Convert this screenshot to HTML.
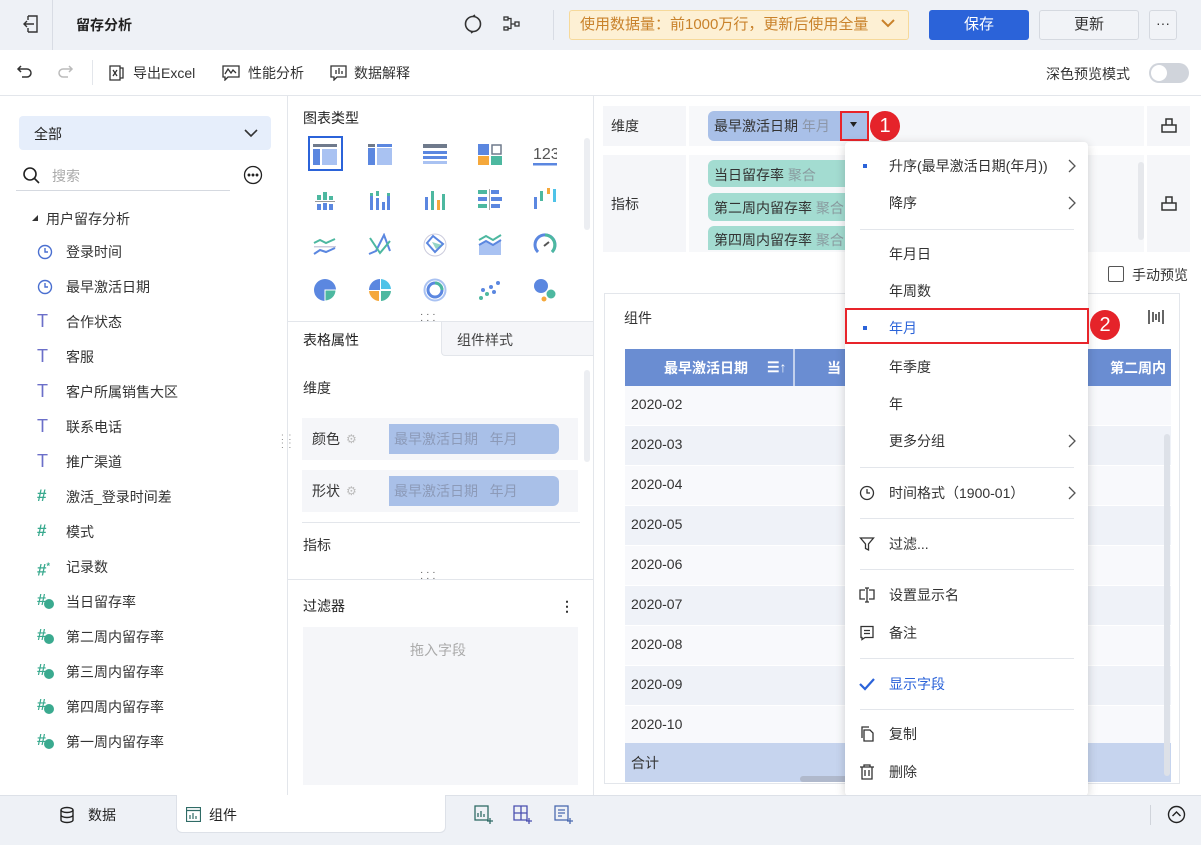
<!DOCTYPE html>
<html><head><meta charset="utf-8">
<style>
*{margin:0;padding:0;box-sizing:border-box}
body{width:1201px;height:845px;position:relative;overflow:hidden;background:#fff;font-family:"Liberation Sans","Noto Sans CJK SC",sans-serif;font-size:14px;color:#333}
.a{position:absolute}
.t{position:absolute;white-space:nowrap;line-height:20px}
svg{position:absolute}
</style></head><body>
<!-- top bar -->
<div class="a" style="left:0;top:0;width:1201px;height:50px;background:#eef1f6"></div>
<div class="a" style="left:52px;top:0;width:1px;height:50px;background:#d8dce4"></div>
<svg style="left:22px;top:14px" width="18" height="20" viewBox="0 0 18 20" fill="none" stroke="#333" stroke-width="1.4"><path d="M6 2h9v16H6M6 2v4M6 18v-4M12 10H2M5 7l-3 3 3 3"/></svg>
<div class="t" style="left:76px;top:15px;font-weight:bold;color:#222">留存分析</div>
<svg style="left:463px;top:14px" width="20" height="20" viewBox="0 0 20 20" fill="none" stroke="#333" stroke-width="1.6"><circle cx="10" cy="10" r="7.5"/><path d="M10 2.5l2-1.5M10 17.5l-2 1.5" /></svg>
<svg style="left:502px;top:15px" width="20" height="18" viewBox="0 0 20 18" fill="none" stroke="#333" stroke-width="1.3"><rect x="2" y="2" width="4" height="3"/><rect x="2" y="12" width="4" height="3"/><rect x="13" y="7" width="4" height="4"/><path d="M6 3.5h3v10H6M9 9h4"/></svg>
<div class="a" style="left:553px;top:10px;width:1px;height:30px;background:#d8dce4"></div>
<div class="a" style="left:569px;top:10px;width:340px;height:30px;background:#fdf0d4;border:1px solid #f6d99a;border-radius:3px"></div>
<div class="t" style="left:580px;top:15px;color:#c9822b;font-size:15px">使用数据量：前1000万行，更新后使用全量</div>
<svg style="left:880px;top:18px" width="16" height="12" viewBox="0 0 16 12" fill="none" stroke="#c9822b" stroke-width="2"><path d="M2 2l6 6 6-6"/></svg>
<div class="a" style="left:929px;top:10px;width:100px;height:30px;background:#2b63d9;border-radius:3px;color:#fff;text-align:center;line-height:30px;font-size:15px">保存</div>
<div class="a" style="left:1039px;top:10px;width:100px;height:30px;background:#f1f3f7;border:1px solid #d5d9e0;border-radius:3px;text-align:center;line-height:28px;font-size:15px">更新</div>
<div class="a" style="left:1149px;top:10px;width:28px;height:30px;background:#f1f3f7;border:1px solid #d5d9e0;border-radius:3px;text-align:center;line-height:24px;font-size:14px">···</div>
<!-- toolbar -->
<div class="a" style="left:0;top:95px;width:1201px;height:1px;background:#e3e6eb"></div>
<svg style="left:16px;top:64px" width="18" height="16" viewBox="0 0 18 16" fill="none" stroke="#333" stroke-width="1.5"><path d="M5 2L2 5l3 3M2 5h9a4 4 0 010 8H6"/></svg>
<svg style="left:56px;top:64px" width="18" height="16" viewBox="0 0 18 16" fill="none" stroke="#bbb" stroke-width="1.5"><path d="M13 2l3 3-3 3M16 5H7a4 4 0 000 8h5"/></svg>
<div class="a" style="left:92px;top:60px;width:1px;height:25px;background:#e3e6eb"></div>
<svg style="left:109px;top:65px" width="15" height="16" viewBox="0 0 15 16" fill="none" stroke="#333" stroke-width="1.3"><path d="M1 1h10v14H1zM11 3h3v10h-3M4 5l4 6M8 5l-4 6"/></svg>
<div class="t" style="left:133px;top:63px">导出Excel</div>
<svg style="left:222px;top:65px" width="18" height="16" viewBox="0 0 18 16" fill="none" stroke="#333" stroke-width="1.3"><path d="M1 1h16v11H6l-3 3v-3H1z M3 9l3-5 3 4 2-3 3 3"/></svg>
<div class="t" style="left:248px;top:63px">性能分析</div>
<svg style="left:330px;top:65px" width="17" height="16" viewBox="0 0 17 16" fill="none" stroke="#333" stroke-width="1.3"><path d="M1 1h15v11H7l-3 3v-3H1z M6 9V5M9 9V3M12 9V6"/></svg>
<div class="t" style="left:354px;top:63px">数据解释</div>
<div class="t" style="left:1046px;top:64px">深色预览模式</div>
<div class="a" style="left:1149px;top:63px;width:40px;height:20px;background:#d0d4db;border-radius:10px"></div>
<div class="a" style="left:1151px;top:65px;width:16px;height:16px;background:#fff;border-radius:8px"></div>
<!-- left panel -->
<div class="a" style="left:19px;top:116px;width:252px;height:34px;background:#e6eefb;border-radius:4px"></div>
<div class="t" style="left:34px;top:124px;color:#222">全部</div>
<svg style="left:244px;top:128px" width="14" height="10" viewBox="0 0 14 10" fill="none" stroke="#333" stroke-width="1.6"><path d="M1 2l6 6 6-6"/></svg>
<svg style="left:22px;top:166px" width="20" height="20" viewBox="0 0 20 20" fill="none" stroke="#222" stroke-width="1.6"><circle cx="8" cy="8" r="6"/><path d="M12.5 12.5L17 17"/></svg>
<div class="t" style="left:52px;top:166px;color:#aaa">搜索</div>
<div class="a" style="left:16px;top:190px;width:214px;height:1px;background:#d5d9e0"></div>
<svg style="left:243px;top:165px" width="20" height="20" viewBox="0 0 20 20" fill="none" stroke="#222" stroke-width="1.3"><circle cx="10" cy="10" r="8.5"/><circle cx="6" cy="10" r=".8" fill="#222"/><circle cx="10" cy="10" r=".8" fill="#222"/><circle cx="14" cy="10" r=".8" fill="#222"/></svg>
<svg style="left:32px;top:215px" width="7" height="7" viewBox="0 0 7 7"><path d="M6 0v6H0z" fill="#333"/></svg>
<div class="t" style="left:46px;top:209px">用户留存分析</div>
<div id="tree"></div>
<div class="a" style="left:287px;top:96px;width:1px;height:699px;background:#e3e6eb"></div>
<div class="t" style="left:281px;top:434px;color:#888;font-size:10px;line-height:8px;letter-spacing:1px">: :<br>: :</div>
<!-- middle panel -->
<div class="t" style="left:303px;top:108px;color:#222">图表类型</div>
<div class="a" style="left:308px;top:136px;width:35px;height:35px;border:2px solid #2b63d9"></div>
<div id="icons"></div>
<div class="a" style="left:584px;top:138px;width:6px;height:92px;background:#eceef2;border-radius:3px"></div>
<div class="a" style="left:288px;top:321px;width:305px;height:1px;background:#e3e6eb"></div>
<div class="t" style="left:420px;top:312px;color:#555;font-size:10px;line-height:6px">· · ·<br>· · ·</div>
<div class="a" style="left:441px;top:322px;width:152px;height:34px;background:#f5f6f9;border-left:1px solid #e3e6eb;border-bottom:1px solid #e3e6eb;border-radius:0 0 0 4px"></div>
<div class="t" style="left:303px;top:330px;color:#222">表格属性</div>
<div class="t" style="left:457px;top:330px;color:#444">组件样式</div>
<div class="a" style="left:584px;top:370px;width:6px;height:92px;background:#eceef2;border-radius:3px"></div>
<div class="t" style="left:303px;top:378px;color:#333">维度</div>
<div class="a" style="left:302px;top:418px;width:276px;height:42px;background:#f5f6f9"></div>
<div class="t" style="left:312px;top:429px">颜色</div>
<div class="t" style="left:346px;top:429px;color:#bbb;font-size:12px">⚙</div>
<div class="a" style="left:389px;top:424px;width:170px;height:30px;background:#a9c0e8;border-radius:0 6px 6px 0"></div>
<div class="t" style="left:394px;top:429px;color:#8c9ab8">最早激活日期 &nbsp; 年月</div>
<div class="a" style="left:302px;top:470px;width:276px;height:42px;background:#f5f6f9"></div>
<div class="t" style="left:312px;top:481px">形状</div>
<div class="t" style="left:346px;top:481px;color:#bbb;font-size:12px">⚙</div>
<div class="a" style="left:389px;top:476px;width:170px;height:30px;background:#a9c0e8;border-radius:0 6px 6px 0"></div>
<div class="t" style="left:394px;top:481px;color:#8c9ab8">最早激活日期 &nbsp; 年月</div>
<div class="a" style="left:302px;top:522px;width:278px;height:1px;background:#e3e6eb"></div>
<div class="t" style="left:303px;top:535px">指标</div>
<div class="a" style="left:288px;top:579px;width:305px;height:1px;background:#e3e6eb"></div>
<div class="t" style="left:420px;top:570px;color:#555;font-size:10px;line-height:6px">· · ·<br>· · ·</div>
<div class="t" style="left:303px;top:596px;color:#222">过滤器</div>
<div class="t" style="left:560px;top:596px;font-weight:bold">⋮</div>
<div class="a" style="left:303px;top:627px;width:275px;height:158px;background:#f5f6f9"></div>
<div class="t" style="left:410px;top:640px;color:#aaa">拖入字段</div>
<div class="a" style="left:593px;top:96px;width:1px;height:699px;background:#e3e6eb"></div>
<!-- right panel -->
<div class="a" style="left:594px;top:96px;width:607px;height:699px;background:#fff"></div>
<div class="a" style="left:603px;top:106px;width:83px;height:40px;background:#f5f6f9"></div>
<div class="a" style="left:689px;top:106px;width:455px;height:40px;background:#f7f8fa"></div>
<div class="a" style="left:1147px;top:106px;width:43px;height:40px;background:#f5f6f9"></div>
<div class="t" style="left:611px;top:116px">维度</div>
<div class="a" style="left:708px;top:111px;width:160px;height:30px;background:#a9c0e8;border-radius:6px 0 0 6px"></div>
<div class="t" style="left:714px;top:116px;color:#333">最早激活日期 <span style="color:#8c96a8">年月</span></div>
<div class="a" style="left:840px;top:111px;width:29px;height:30px;border:2px solid #e8242a"></div>
<svg style="left:850px;top:122px" width="8" height="6"><path d="M0 0h7L3.5 5z" fill="#222"/></svg>
<div class="a" style="left:870px;top:111px;width:30px;height:30px;background:#e5232a;border-radius:15px;color:#fff;text-align:center;line-height:30px;font-size:20px">1</div>
<svg style="left:1160px;top:116px" width="18" height="18" viewBox="0 0 18 18" fill="none" stroke="#333" stroke-width="1.5"><path d="M2 9h14v7H2zM6 9V3h6v6"/></svg>
<div class="a" style="left:603px;top:155px;width:83px;height:97px;background:#f5f6f9"></div>
<div class="a" style="left:689px;top:155px;width:455px;height:97px;background:#f7f8fa"></div>
<div class="a" style="left:1147px;top:155px;width:43px;height:97px;background:#f5f6f9"></div>
<div class="t" style="left:611px;top:194px">指标</div>
<div class="a" style="left:708px;top:160px;width:140px;height:27px;background:#a3dcd1;border-radius:6px 0 0 6px"></div>
<div class="t" style="left:714px;top:165px">当日留存率 <span style="color:#8a9ca0">聚合</span></div>
<div class="a" style="left:708px;top:193px;width:140px;height:28px;background:#a3dcd1;border-radius:6px 0 0 6px"></div>
<div class="t" style="left:714px;top:198px">第二周内留存率 <span style="color:#8a9ca0">聚合</span></div>
<div class="a" style="left:708px;top:226px;width:140px;height:24px;background:#a3dcd1;border-radius:6px 0 0 0"></div>
<div class="t" style="left:714px;top:230px">第四周内留存率 <span style="color:#8a9ca0">聚合</span></div>
<div class="a" style="left:1138px;top:162px;width:6px;height:78px;background:#e6e8ec;border-radius:3px"></div>
<svg style="left:1160px;top:194px" width="18" height="18" viewBox="0 0 18 18" fill="none" stroke="#333" stroke-width="1.5"><path d="M2 9h14v7H2zM6 9V3h6v6"/></svg>
<div class="a" style="left:1108px;top:266px;width:16px;height:16px;border:1px solid #555;border-radius:2px"></div>
<div class="t" style="left:1132px;top:265px">手动预览</div>
<div class="a" style="left:604px;top:293px;width:576px;height:491px;border:1px solid #e3e6eb"></div>
<div class="t" style="left:624px;top:308px">组件</div>
<svg style="left:1147px;top:309px" width="18" height="16" viewBox="0 0 18 16" fill="none" stroke="#333" stroke-width="1.5"><path d="M2 1v14M16 1v14M6 3v10M12 3v10M9 5v6"/></svg>
<div class="a" style="left:625px;top:349px;width:546px;height:37px;background:#6a8dd2"></div>
<div class="a" style="left:793px;top:349px;width:2px;height:433px;background:#fff;opacity:.6"></div>
<div class="t" style="left:664px;top:358px;color:#fff;font-weight:bold">最早激活日期</div>
<div class="t" style="left:767px;top:357px;color:#fff;font-weight:bold">☰↑</div>
<div class="t" style="left:827px;top:358px;color:#fff;font-weight:bold">当</div>
<div class="t" style="left:1110px;top:358px;color:#fff;font-weight:bold">第二周内</div>
<div id="rows"></div>
<div class="a" style="left:625px;top:743px;width:546px;height:39px;background:#c6d4ee"></div>
<div class="t" style="left:631px;top:753px">合计</div>
<div class="a" style="left:1164px;top:434px;width:6px;height:342px;background:#dde1e8;border-radius:3px"></div>
<div class="a" style="left:800px;top:776px;width:60px;height:6px;background:#b0b9cc;border-radius:3px"></div>
<!-- dropdown -->
<div class="a" style="left:845px;top:142px;width:243px;height:654px;background:#fff;border-radius:4px;box-shadow:0 2px 10px rgba(0,0,0,.18)"></div>
<div id="menu"></div>
<div class="a" style="left:845px;top:308px;width:244px;height:36px;border:2px solid #e8242a"></div>
<div class="a" style="left:1090px;top:310px;width:30px;height:30px;background:#e5232a;border-radius:15px;color:#fff;text-align:center;line-height:30px;font-size:20px">2</div>
<!-- bottom bar -->
<div class="a" style="left:0;top:795px;width:1201px;height:50px;background:#eef1f6;border-top:1px solid #dde1e8"></div>
<svg style="left:59px;top:806px" width="16" height="18" viewBox="0 0 16 18" fill="none" stroke="#222" stroke-width="1.4"><ellipse cx="8" cy="4" rx="6" ry="2.5"/><path d="M2 4v10c0 1.4 2.7 2.5 6 2.5s6-1.1 6-2.5V4M2 9c0 1.4 2.7 2.5 6 2.5S14 10.4 14 9"/></svg>
<div class="t" style="left:88px;top:805px;color:#222">数据</div>
<div class="a" style="left:176px;top:795px;width:270px;height:38px;background:#fff;border:1px solid #dde1e8;border-top:none;border-radius:0 0 6px 6px"></div>
<svg style="left:186px;top:807px" width="15" height="15" viewBox="0 0 15 15" fill="none" stroke="#2f6b66" stroke-width="1.2"><rect x=".5" y=".5" width="14" height="14"/><path d="M.5 3.5h14M4 12V8M7 12V6M10 12V9"/></svg>
<div class="t" style="left:209px;top:805px;color:#222">组件</div>
<svg style="left:474px;top:805px" width="20" height="20" viewBox="0 0 20 20" fill="none" stroke="#2f6b66" stroke-width="1.3"><rect x="1" y="1" width="13" height="14"/><path d="M4 12V8M7 12V6M10 12V9M16 13v6M13 16h6"/></svg>
<svg style="left:513px;top:805px" width="20" height="20" viewBox="0 0 20 20" fill="none" stroke="#4a4fb0" stroke-width="1.3"><path d="M1 1h13v14H1zM1 8h13M8 1v14M16 13v6M13 16h6"/></svg>
<svg style="left:554px;top:805px" width="20" height="20" viewBox="0 0 20 20" fill="none" stroke="#4a6ab0" stroke-width="1.3"><rect x="1" y="1" width="13" height="14"/><path d="M4 5h7M4 8h7M4 11h4M16 13v6M13 16h6"/></svg>
<div class="a" style="left:1150px;top:805px;width:1px;height:20px;background:#d0d4db"></div>
<svg style="left:1167px;top:805px" width="19" height="19" viewBox="0 0 19 19" fill="none" stroke="#222" stroke-width="1.4"><circle cx="9.5" cy="9.5" r="8"/><path d="M5.5 11l4-4 4 4"/></svg>

<script>
var tr=[["c","登录时间"],["c","最早激活日期"],["T","合作状态"],["T","客服"],["T","客户所属销售大区"],["T","联系电话"],["T","推广渠道"],["#","激活_登录时间差"],["#","模式"],["#*","记录数"],["f","当日留存率"],["f","第二周内留存率"],["f","第三周内留存率"],["f","第四周内留存率"],["f","第一周内留存率"]];
var h="";tr.forEach(function(e,i){var y=252+i*35;var ic;
if(e[0]=="c")ic='<svg style="left:37px;top:'+(y-8)+'px" width="16" height="16" viewBox="0 0 16 16" fill="none" stroke="#4a6fd0" stroke-width="1.4"><circle cx="8" cy="8" r="6.5"/><path d="M8 4v4h3"/></svg>';
else if(e[0]=="T")ic='<div class="t" style="left:37px;top:'+(y-11)+'px;color:#6b6fc9;font-size:18px">T</div>';
else if(e[0]=="#")ic='<div class="t" style="left:37px;top:'+(y-11)+'px;color:#3aaa8f;font-size:17px;font-weight:bold">#</div>';
else if(e[0]=="#*")ic='<div class="t" style="left:37px;top:'+(y-11)+'px;color:#3aaa8f;font-size:17px;font-weight:bold">#<sup style="font-size:9px">*</sup></div>';
else ic='<div class="t" style="left:37px;top:'+(y-11)+'px;color:#3aaa8f;font-size:16px;font-weight:bold">#</div><div class="a" style="left:44px;top:'+(y-3)+'px;width:10px;height:10px;border-radius:5px;background:#3aaa8f"></div>';
h+=ic+'<div class="t" style="left:66px;top:'+(y-10)+'px">'+e[1]+'</div>';});
document.getElementById("tree").innerHTML=h;
// chart icons
var B="#5b87e0",G="#4db8a0",O="#f5a83b",L="#a9c2f2";h="";
var xs=[313,368,423,478,533],ys=[143,188,233,278];
function ic(x,y,s){return '<svg style="left:'+x+'px;top:'+y+'px" width="24" height="24" viewBox="0 0 24 24">'+s+'</svg>';}
var S=[
'<rect x="0" y="1" width="24" height="3" fill="#6f7a8c"/><rect x="0" y="6" width="7" height="16" fill="'+B+'"/><rect x="9" y="6" width="15" height="16" fill="'+L+'"/>',
'<rect x="0" y="1" width="7" height="3" fill="#6f7a8c"/><rect x="9" y="1" width="15" height="3" fill="'+B+'"/><rect x="0" y="5" width="7" height="17" fill="'+B+'"/><rect x="9" y="5" width="15" height="17" fill="'+L+'"/>',
'<rect x="0" y="1" width="24" height="4" fill="#6f7a8c"/><rect x="0" y="8" width="24" height="3" fill="'+B+'"/><rect x="0" y="13" width="24" height="3" fill="'+B+'"/><rect x="0" y="18" width="24" height="3" fill="'+L+'"/>',
'<rect x="0" y="1" width="11" height="11" fill="'+B+'"/><rect x="14" y="2" width="9" height="9" fill="none" stroke="#6f7a8c" stroke-width="1.5"/><rect x="0" y="13" width="11" height="9" fill="'+O+'"/><rect x="13" y="13" width="11" height="9" fill="'+G+'"/>',
'<text x="0" y="16" font-size="16" fill="#555" font-family="Liberation Sans">123</text><rect x="0" y="20" width="24" height="2.5" fill="'+B+'"/>',
'<rect x="2" y="13" width="20" height="1" fill="#999"/><rect x="4" y="7" width="4" height="5" fill="'+G+'"/><rect x="10" y="4" width="4" height="8" fill="'+G+'"/><rect x="16" y="8" width="4" height="4" fill="'+G+'"/><rect x="4" y="16" width="4" height="6" fill="'+B+'"/><rect x="10" y="15" width="4" height="7" fill="'+B+'"/><rect x="16" y="16" width="4" height="6" fill="'+B+'"/>',
'<rect x="2" y="8" width="3" height="14" fill="'+B+'"/><rect x="2" y="5" width="3" height="3" fill="'+G+'"/><rect x="8" y="10" width="3" height="12" fill="'+B+'"/><rect x="8" y="3" width="3" height="5" fill="'+G+'"/><rect x="14" y="14" width="3" height="8" fill="'+B+'"/><rect x="19" y="8" width="3" height="14" fill="'+B+'"/><rect x="19" y="5" width="3" height="3" fill="'+G+'"/>',
'<rect x="2" y="9" width="3" height="13" fill="'+B+'"/><rect x="8" y="3" width="3" height="19" fill="'+G+'"/><rect x="14" y="12" width="3" height="10" fill="'+O+'"/><rect x="19" y="6" width="3" height="16" fill="'+G+'"/>',
'<rect x="0" y="2" width="9" height="4" fill="'+G+'"/><rect x="13" y="2" width="8" height="4" fill="'+B+'"/><rect x="0" y="9" width="9" height="4" fill="'+B+'"/><rect x="13" y="9" width="11" height="4" fill="'+B+'"/><rect x="0" y="16" width="9" height="4" fill="'+G+'"/><rect x="13" y="16" width="9" height="4" fill="'+B+'"/><rect x="11" y="1" width="1" height="21" fill="#aaa"/>',
'<rect x="1" y="9" width="3" height="12" fill="'+B+'"/><rect x="7" y="3" width="3" height="10" fill="'+G+'"/><rect x="14" y="0" width="3" height="6" fill="'+O+'"/><rect x="20" y="1" width="3" height="13" fill="#4fc3e8"/>',
'<path d="M1 10l6-3 6 3 9-4" stroke="'+G+'" stroke-width="2" fill="none"/><rect x="1" y="13" width="22" height="1.5" fill="#ccd"/><path d="M1 21l6-4 6 2 9-4" stroke="'+B+'" stroke-width="2" fill="none"/>',
'<path d="M1 21l7-3 8-16 6 16" stroke="'+B+'" stroke-width="2" fill="none"/><path d="M2 5l10 15 10-12" stroke="'+G+'" stroke-width="2" fill="none"/>',
'<circle cx="12" cy="12" r="11" stroke="#ccd" fill="none"/><path d="M4 10l6-7 10 8-8 8z" stroke="'+B+'" stroke-width="2" fill="none"/><path d="M9 9l10 3-6 4z" fill="'+G+'" opacity=".6"/>',
'<path d="M1 22V12l7-4 7 4 8-5v15z" fill="'+L+'"/><path d="M1 12l7-4 7 4 8-5" stroke="'+B+'" stroke-width="2" fill="none"/><path d="M1 7l7-4 7 4 8-5" stroke="'+G+'" stroke-width="2" fill="none"/>',
'<path d="M5 19A10 10 0 1 1 19 19" stroke="'+B+'" stroke-width="3" fill="none"/><path d="M12 2A10 10 0 0 1 19 19" stroke="'+G+'" stroke-width="3" fill="none"/><path d="M11 13l5-4" stroke="#555" stroke-width="2"/>',
'<circle cx="12" cy="12" r="11" fill="'+B+'"/><path d="M12 12h11a11 11 0 0 1-11 11z" fill="'+G+'" stroke="#fff"/>',
'<path d="M12 12V1A11 11 0 0 0 1 12z" fill="'+B+'"/><path d="M13 11V1a11 11 0 0 1 10 10z" fill="#4fc3e8"/><path d="M11 13H1a11 11 0 0 0 10 10z" fill="'+O+'"/><path d="M13 13h10a11 11 0 0 1-10 10z" fill="'+G+'"/>',
'<circle cx="12" cy="12" r="10.5" stroke="'+L+'" stroke-width="2" fill="none"/><circle cx="12" cy="12" r="7" stroke="'+B+'" stroke-width="3" fill="none"/><path d="M12 5a7 7 0 0 1 7 7" stroke="'+G+'" stroke-width="3" fill="none"/>',
'<circle cx="3" cy="20" r="2" fill="'+G+'"/><circle cx="9" cy="16" r="2" fill="'+G+'"/><circle cx="5" cy="12" r="2" fill="'+B+'"/><circle cx="13" cy="9" r="2" fill="'+B+'"/><circle cx="16" cy="14" r="2" fill="'+B+'"/><circle cx="20" cy="5" r="2" fill="'+B+'"/>',
'<circle cx="8" cy="8" r="7" fill="'+B+'"/><circle cx="18" cy="16" r="4.5" fill="'+G+'"/><circle cx="11" cy="21" r="2.5" fill="'+O+'"/>'];
S.forEach(function(s,i){h+=ic(xs[i%5],ys[Math.floor(i/5)],s);});
document.getElementById("icons").innerHTML=h;
// rows
h="";for(var i=0;i<9;i++){var y=386+i*40;h+='<div class="a" style="left:625px;top:'+y+'px;width:546px;height:39px;background:'+(i%2?"#eff2f8":"#f8f9fc")+'"></div><div class="t" style="left:631px;top:'+(y+8)+'px">2020-'+("0"+(i+2)).slice(-2)+'</div>';}
document.getElementById("rows").innerHTML=h;
// menu
var M=[[166,"升序(最早激活日期(年月))",">","dot"],[203,"降序",">"],[254,"年月日"],[291,"年周数"],[328,"年月","","dotb"],[367,"年季度"],[404,"年"],[441,"更多分组",">"],[493,"时间格式（1900-01）",">","clk"],[544,"过滤...","","flt"],[595,"设置显示名","","nm"],[633,"备注","","nt"],[684,"显示字段","","chk"],[734,"复制","","cp"],[772,"删除","","del"]];
h="";[229,467,518,569,658,709].forEach(function(y){h+='<div class="a" style="left:860px;top:'+y+'px;width:214px;height:1px;background:#e3e6eb"></div>';});
M.forEach(function(m){var y=m[0],col=(m[3]=="dotb"||m[3]=="chk")?"#2b63d9":"#333";
h+='<div class="t" style="left:889px;top:'+(y-10)+'px;color:'+col+'">'+m[1]+'</div>';
if(m[2])h+='<svg style="left:1068px;top:'+(y-7)+'px" width="8" height="14"><path d="M1 1l6 6-6 6" stroke="#555" stroke-width="1.3" fill="none"/></svg>';
var k=m[3],s="";
if(k=="dot"||k=="dotb")s='<div class="a" style="left:863px;top:'+(y-2)+'px;width:4px;height:4px;background:#2b63d9"></div>';
var sv=function(p){return '<svg style="left:859px;top:'+(y-8)+'px" width="16" height="16" viewBox="0 0 16 16" fill="none" stroke="#333" stroke-width="1.3">'+p+'</svg>';};
if(k=="clk")s=sv('<circle cx="8" cy="8" r="6.5"/><path d="M8 4v4h3"/>');
if(k=="flt")s=sv('<path d="M1.5 2h13L9.5 8v6l-3-1.5V8z"/>');
if(k=="nm")s=sv('<path d="M6 3H1v9h5M10 3h5v9h-5M8 1v14M6 1h4M6 15h4"/>');
if(k=="nt")s=sv('<path d="M2 1.5h12v11H6l-3 2v-2H2z M5 5.5h6M5 8.5h6"/>');
if(k=="chk")s='<svg style="left:859px;top:'+(y-7)+'px" width="16" height="14"><path d="M1 7l5 5 9-10" stroke="#2b63d9" stroke-width="2.2" fill="none"/></svg>';
if(k=="cp")s=sv('<path d="M5 4h6l3 3v8H5zM3 12V1h7"/>');
if(k=="del")s=sv('<path d="M1 3h14M5 3V1h6v2M3 3v12h10V3M6 6v6M10 6v6"/>');
h+=s;});
document.getElementById("menu").innerHTML=h;
</script>
</body></html>
